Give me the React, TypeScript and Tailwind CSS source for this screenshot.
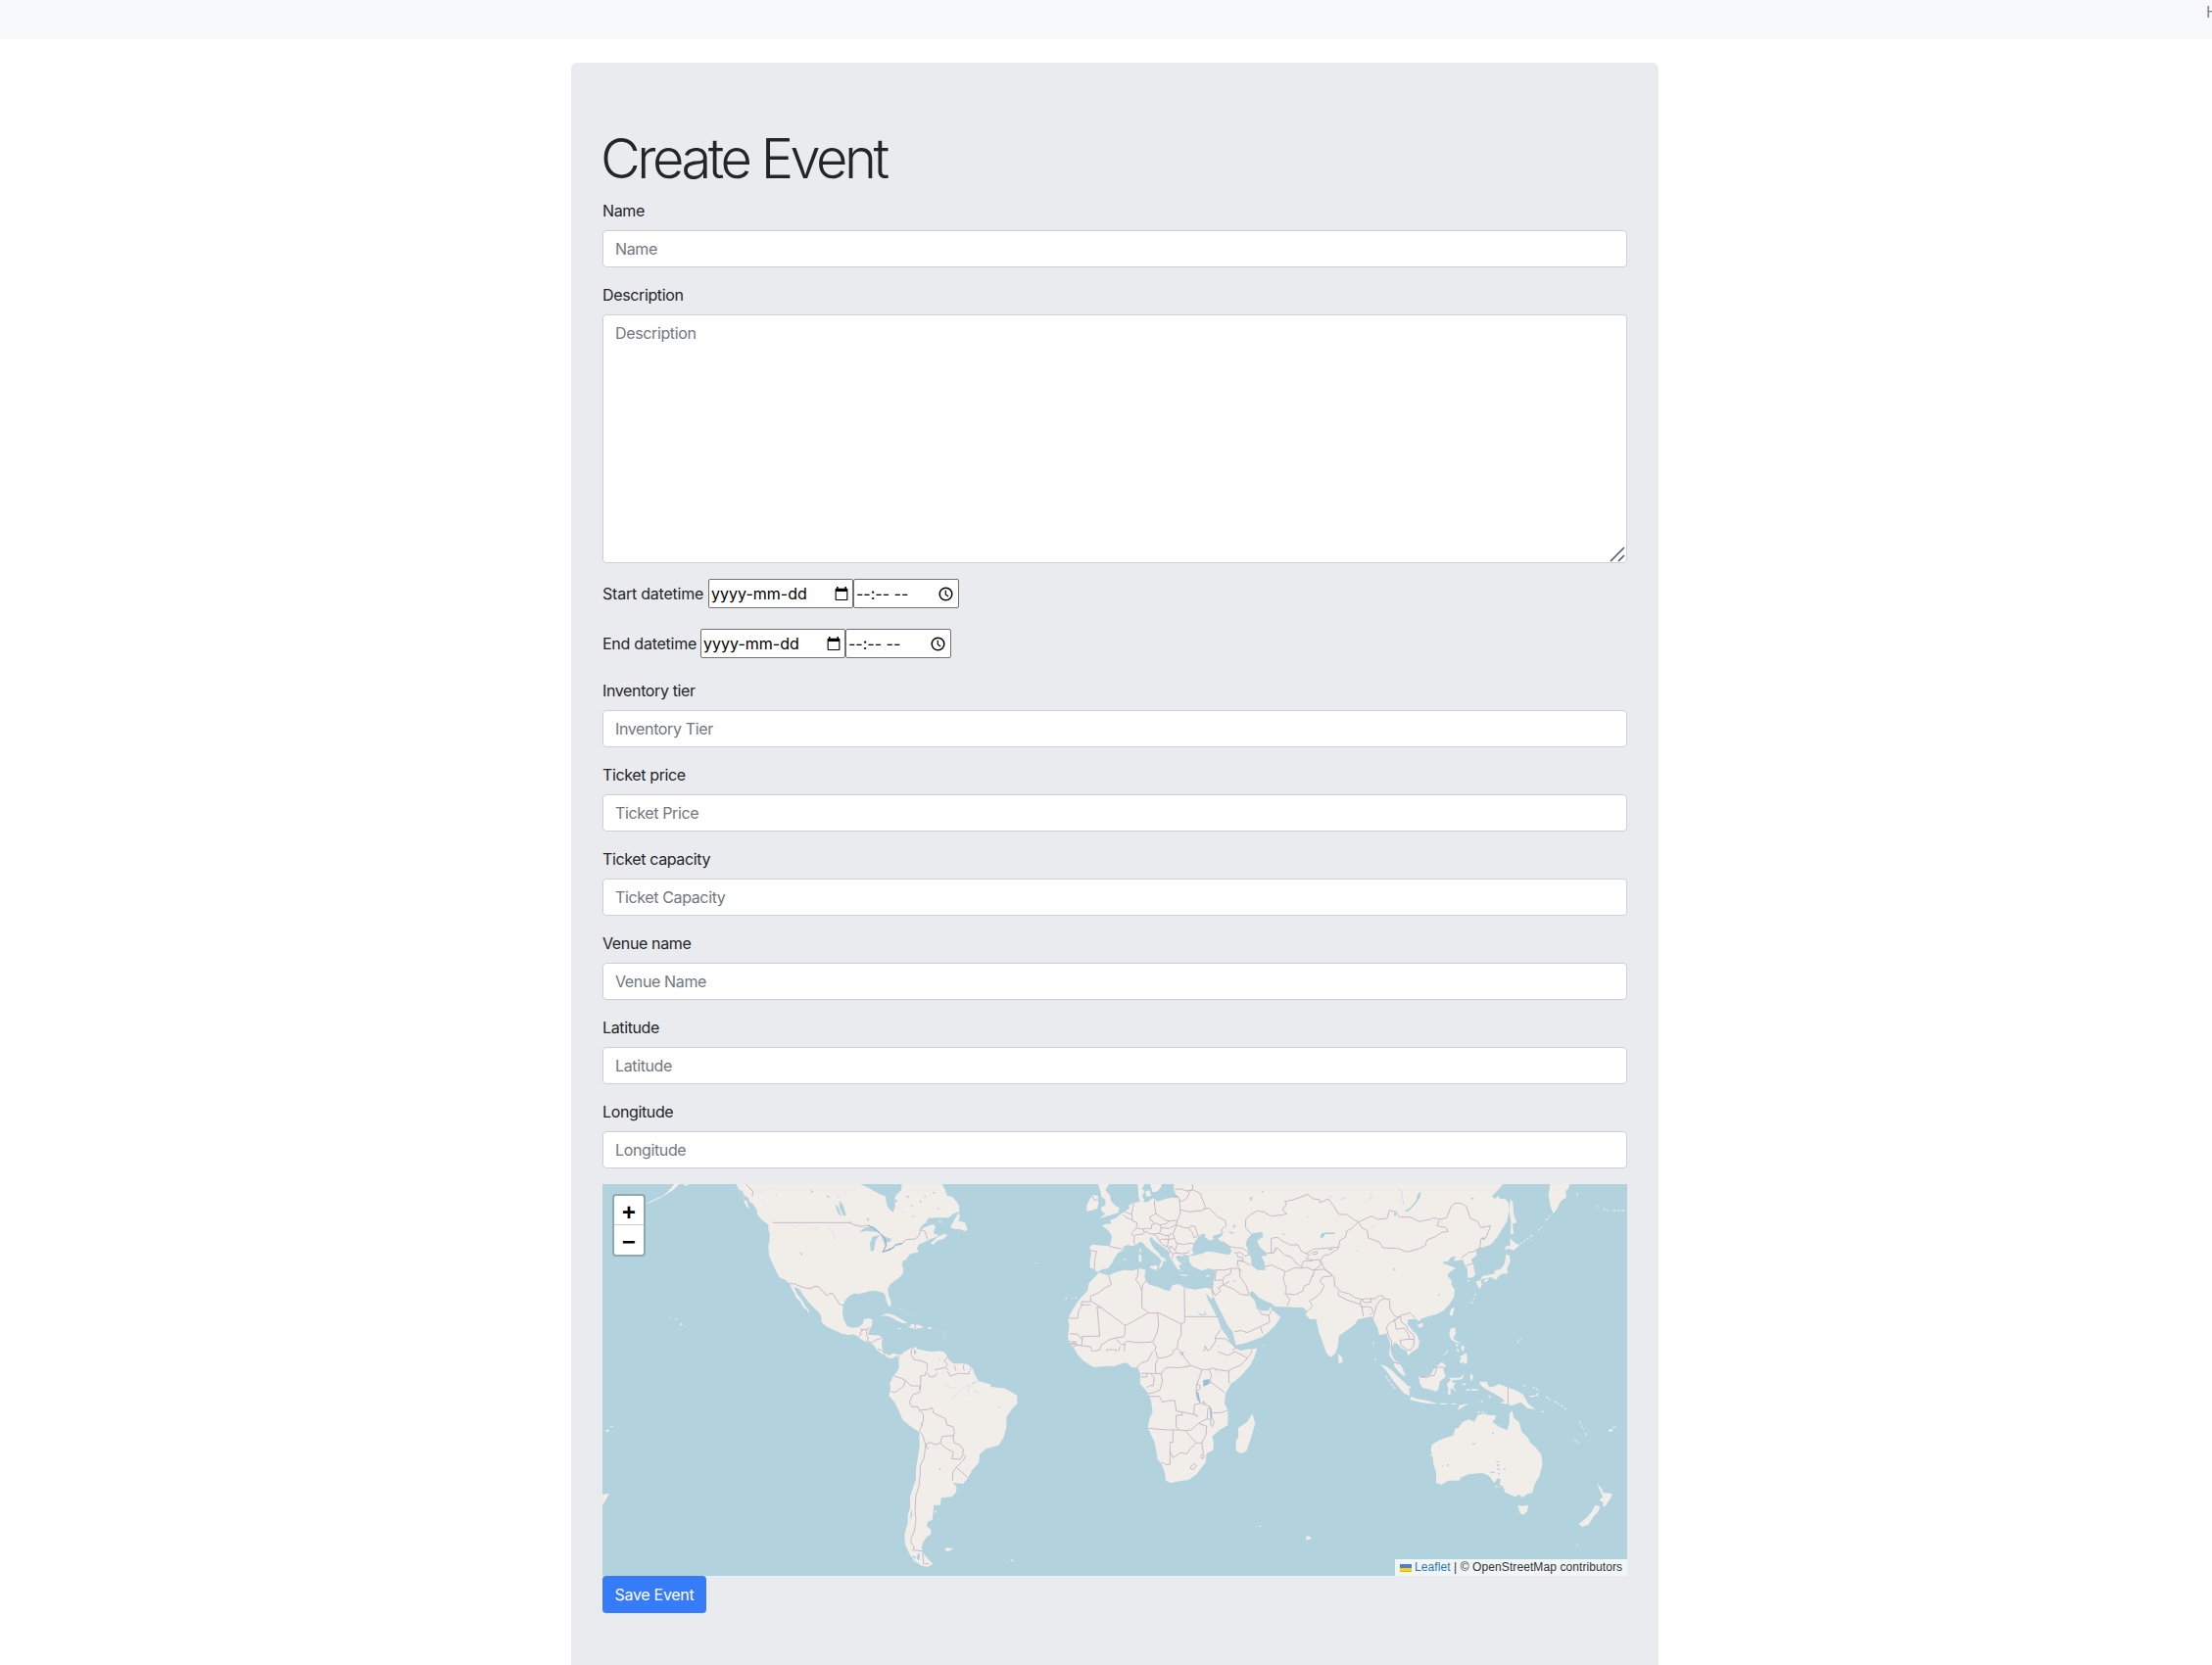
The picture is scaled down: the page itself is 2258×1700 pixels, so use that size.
import React from 'react';

function Field({ label, placeholder }: { label: string; placeholder: string }) {
  return (
    <div className="mb-4 flex flex-col">
      <label className="mb-2 h-6 self-start tracking-[-0.37px]">{label}</label>
      <input
        className="h-[38px] w-full rounded border border-[#cdd1d7] bg-white px-3 py-1.5 tracking-[-0.37px] placeholder:text-[#71777e] placeholder:opacity-100"
        placeholder={placeholder}
      />
    </div>
  );
}

function DateTime({ label, labelClass }: { label: string; labelClass: string }) {
  return (
    <div className="flex h-[30px] items-center">
      <span className={labelClass}>{label}</span>
      <div className="flex h-[30px] w-[148px] items-center justify-between rounded-[2px] border border-[#717171] bg-white pr-1 pl-[2px] text-black">
        <span className="tracking-[0.02px]">yyyy-mm-dd</span>
        <svg width="14" height="15" viewBox="0 0 14 15">
          <path d="M2.8 0v2M11.2 0v2" stroke="#000" strokeWidth="1.5" />
          <path d="M1.5 1.8h11a.9.9 0 0 1 .9.9v10.4a.9.9 0 0 1-.9.9h-11a.9.9 0 0 1-.9-.9V2.700a.9.9 0 0 1 .9-.9zM1.700 5v7.900h10.600V5z" fillRule="evenodd" />
        </svg>
      </div>
      <div className="flex h-[30px] w-[108px] items-center justify-between rounded-[2px] border border-[#717171] bg-white pr-[5px] pl-[2px] text-black">
        <span className="whitespace-pre">--:-- --</span>
        <svg width="15" height="15" viewBox="0 0 15 15" fill="none" stroke="#000">
          <circle cx="7.500" cy="7.500" r="6.300" strokeWidth="1.500" />
          <path d="M7.300 3.700v4.200l2.800 2" strokeWidth="1.200" />
        </svg>
      </div>
    </div>
  );
}

const border = { fill: 'none', stroke: '#c8b8c7', strokeWidth: 3, strokeLinejoin: 'round' as const };

function WorldMap() {
  return (
    <svg className="block" width="1046" height="400" viewBox="0 0 1046 400" fill="#f1eeea">
      <rect width="1046" height="400" fill="#b2d2dd" />

      {/* North and Central America */}
      <g transform="translate(-5 -9) scale(.33333)">
        <path d="M425 27L432 42 445 50 450 62 462 70 465 80 475 88 487 105 490 122 505 130 515 140 523 150 523 165 527 180 526 205 523 215 525 245 532 262 540 280 550 300 556 312 575 320 588 332 595 348 602 360 608 375 622 388 628 402 640 412 648 424 647 412 635 400 628 385 618 372 610 362 602 343 612 345 622 355 630 368 640 380 652 395 665 408 678 420 685 432 686 450 700 463 725 475 750 485 768 489 785 487 798 495 810 505 830 512 845 520 855 535 868 545 880 553 893 560 905 560 915 552 922 565 923 590 915 605 905 615 900 632H1168L1155 610 1150 595 1135 580 1120 577 1090 577 1075 565 1068 550 1060 540 1045 538 1025 541 1005 538 990 535 978 532 975 523 965 527 955 532 940 540 930 550 918 548 905 545 893 552 880 545 872 535 870 515 873 498 860 490 845 490 828 488 832 475 840 460 842 442 828 438 815 442 812 455 800 465 780 467 765 463 755 445 750 425 752 400 757 385 770 370 785 362 800 363 815 360 835 355 850 353 868 358 875 360 882 370 885 388 893 403 899 400 898 385 892 370 888 350 895 335 910 323 925 313 935 300 937 285 932 275 935 262 945 258 955 242 970 238 984 235 978 225 983 212 1000 205 1010 200 1020 195 1035 190 1045 182 1030 180 1030 168 1036 158 1028 150 1000 160 983 172 990 158 1005 145 1013 131 1040 130 1075 130 1090 118 1108 110 1107 92 1095 75 1085 65 1070 62 1065 45 1055 27H932L930 45 915 60 908 75 912 95 905 113 895 105 885 90 882 65 865 58 850 50 830 38 805 27Z" />
        <path d="M1020 208L1040 190 1060 180 1072 182 1060 195 1040 200 1028 212ZM1080 160L1090 140 1105 115 1110 125 1105 140 1125 145 1133 165 1125 172 1110 165 1095 165ZM1042 137L1062 146 1045 142ZM490 122L505 128 525 142 537 153 522 150 505 138ZM145 90L165 78 200 62 215 50 235 27H250L235 42 212 58 190 70 165 82ZM264 27H280L270 34ZM447 75L458 80 464 103 455 95ZM863 433L885 423 905 427 925 438 950 452 935 453 915 445 900 435 880 430ZM948 465L960 462 958 456 985 458 1000 466 975 470ZM917 467L932 469 922 472ZM1010 466H1023V470H1010ZM252 452L262 456 255 461ZM236 438L244 441 240 443ZM219 432L225 434 222 436ZM248 444L254 447Z" />
        <path d="M915 392L918 400M925 410L938 414M943 420L948 430M960 425L972 433M1045 473L1055 477 1061 490 1062 505M1068 538L1074 545M425 40L445 62 462 90M432 30L450 45" stroke="#d9e3e2" strokeWidth="3" strokeDasharray="4 5" fill="none" />
        <path d="M740 78L752 92 762 125 752 122 742 102ZM727 88L736 96 748 128 735 115ZM800 175L820 160 845 156 865 175 850 173 825 170ZM837 234L834 210 842 188 865 184 852 198 846 230ZM865 180L885 190 900 195 895 205 885 205 882 220 872 195ZM873 235L895 222 914 220 890 232ZM908 216L935 208 930 214ZM825 128L833 134 828 142ZM770 140L778 145 774 149ZM618 235L628 240 625 246ZM655 42L662 55 654 52ZM700 60L712 67 704 70ZM970 531L977 540 973 550 969 545ZM960 125L975 130 968 124ZM1025 50L1034 52 1030 58ZM987 75L993 82 986 85ZM905 85L920 80 912 72ZM945 60L955 66 949 70ZM1000 60L1006 64 1002 68ZM1040 98L1048 103 1041 105ZM960 90L968 94 962 96ZM735 63L742 66 736 68ZM1045 560L1049 562 1047 568Z" fill="#b2d2dd" />
        <path d="M490 50L505 55M500 75L512 90M520 36L530 45M548 55L550 68M600 160L615 156M665 162L680 158M705 160L725 178 725 200M930 108L945 115" fill="none" stroke="#dde5e5" strokeWidth="3" />
        <g {...border}>
          <path d="M454 27L468 42 476 50 474 64M536 145H772L785 152 810 157 828 153 845 162 865 178 880 192 884 215 873 235 900 226 912 213 933 208 945 197 972 195 983 187 990 167 1003 172 1010 195M586 332L602 332 615 338 640 346 658 346 662 340 675 341 690 355 698 366 706 367 710 362 720 362 730 378 742 396 754 398M797 497L808 486 803 482 812 476 805 472H828L832 466M824 472V492L830 497 825 506 840 514 850 505 872 498M858 532L868 536 878 543 878 553M920 550L924 563M973 455V468M975 523L962 532 960 550 970 565 990 568 1008 575 1010 600 1018 618 1032 615 1040 605 1033 595 1062 590 1072 580 1062 568 1070 558M1066 588L1077 600 1082 615 1095 612 1105 606 1097 598 1093 582M1105 606L1120 608 1128 605 1120 592 1122 580M1128 605L1138 608 1142 592M908 615L930 622 945 630M988 630L990 615 1008 612" />
          <path d="M828 153L845 162 865 178 880 192 884 215 873 235 900 226 912 213 933 208" stroke="#9badcb" />
        </g>
      </g>

      {/* Europe, Middle East and northern Africa */}
      <g transform="translate(385 -9) scale(.33333)">
        <path d="M595 27V44L600 58 610 70 590 68 570 72 545 80 530 70 515 82 500 82 505 75 498 65 505 48 497 42 505 27H484L486 45 486 62 492 80 470 85 455 93 460 100 445 110 430 120 420 130 400 138 403 148 385 150 374 154 385 162 395 170 405 185 402 205 398 217 375 215 345 212 337 220 342 240 338 260 338 285 350 286 360 296 375 288 392 285 405 270 412 255 422 240 440 228 440 218 455 213 465 217 480 212 492 203 500 207 510 220 520 228 535 240 548 250 557 262 548 284 552 286 560 275 562 262 572 265 568 255 555 248 548 238 535 225 525 210 520 195 528 188 532 197 545 208 560 218 570 225 580 235 582 250 590 262 598 275 608 290 615 288 610 275 620 272 608 262 600 250 612 245 620 250 625 243 640 246 655 240 650 228 658 205 670 188 680 180 692 180 690 190 705 200 718 195 712 187 725 182 735 180 748 172 742 185 728 195 745 205 765 218 772 232 765 243 740 240 715 235 695 233 680 240 660 245 640 248 642 265 652 280 665 285 680 292 700 285 722 290 720 310 715 330 710 347 690 345 660 350 630 345 610 333 590 337 582 355 565 350 545 342 520 335 510 325 505 310 508 290 490 285 470 292 440 290 415 298 395 307 380 303 365 298 355 310 335 330 330 355 310 375 298 390 280 420 270 440 275 460 270 495 275 515 290 530 300 550 320 565 335 580 350 587 380 582 410 585 440 575 460 573 470 585 490 588 497 605 495 632H780L800 610 825 585 840 560 850 530 825 532 800 537 785 530 770 515 755 490 740 470 730 440 715 410 700 383 692 360 710 380 716 370 725 392 745 430 757 455 775 480 780 500 785 520 810 515 840 505 865 495 885 480 905 460 922 435 905 420 893 412 893 398 885 415 865 415 855 408 848 400 840 380 828 370 828 357 838 356 855 375 875 385 895 393 903 402 935 403 970 405 990 405 1005 418 998 425 1010 440 1030 440 1035 460 1040 485 1052 505V27Z" />
        <path d="M363 27H397L385 45 400 62 402 78 415 92 428 100 424 115 400 122 368 131 385 118 372 108 373 97 385 92 385 75 372 65 370 48ZM328 110L328 92 335 78 345 60 362 62 364 85 360 102 345 107ZM522 27L530 52 542 50 555 38 558 27ZM507 50L520 45 525 62 512 66ZM487 242L495 243 496 263 488 266ZM491 222L495 226 493 238 490 235ZM520 279L545 275 542 291 525 284ZM614 303L638 306 635 309 615 307ZM690 309L706 304 700 311ZM440 258L450 254 446 260ZM422 265L427 266 424 268ZM637 272L640 276ZM170 268H178V270H170ZM193 277L200 278ZM260 377L268 373 266 380ZM280 378L285 372 282 380ZM291 375L299 372 296 378ZM266 330L271 331ZM198 480L203 478M218 487L222 494M206 495L212 497M868 518L878 519 870 521ZM612 290L625 296 620 292Z" />
        <path d="M820 195L835 178 865 173 868 188 850 200 858 220 875 235 880 245 862 248 872 265 875 290 850 290 832 275 832 255 822 230 815 210ZM826 70L836 65 832 80ZM775 155L785 150 778 165ZM780 175L760 172 772 180ZM690 138L700 143ZM674 122L682 127ZM862 50L872 47 865 55ZM925 178L938 180 930 183ZM1000 125L1006 127 1002 131ZM787 267L790 274 786 271ZM888 304L897 306ZM846 397L854 400 854 412 848 409ZM729 521L734 522 732 527ZM1042 180L1050 176V190Z" fill="#b2d2dd" />
        <path d="M670 422L680 428 692 426 690 418M403 548L410 560 415 570M778 323L785 325M900 235L905 228 906 220" fill="none" stroke="#a9ccda" strokeWidth="3" />
        <path d="M616 262L630 265M625 250L635 262M622 278L632 288M642 290L650 294" stroke="#d9e3e2" strokeWidth="3" strokeDasharray="4 3" fill="none" />
        <g {...border}>
          {/* western and central Europe */}
          <path d="M345 62L350 75 362 76M398 217L415 222 438 226M337 230L358 233 352 262 352 286M438 120L450 130 468 137M445 112L465 120 470 95 473 85M466 118L468 140 482 145 480 162 468 175 466 182 474 190 472 205 478 212M482 162L500 165 515 162 525 165 527 152 538 147 525 138 520 128 540 118 536 95 535 78M540 118L555 128 570 138 580 140 605 138 615 115 612 75M474 184L485 182 500 180 508 172 520 178 530 180 550 178 556 165 553 152 540 147M500 165L505 175M553 152L572 148 580 140M556 160L580 163 603 150 605 138M550 178L570 185 580 183 595 175 603 152 625 160 640 162 648 155 660 157 665 175 670 185 655 192M530 180L545 190 550 200 560 195 580 197 578 183M550 200L560 212 575 220 578 197M578 197L597 193 592 180M578 220L588 218 598 230 605 212 597 193M605 208L625 212 642 208 658 210M598 230L606 238 620 240 638 238 642 230M575 220L584 232 580 240M588 218L580 228 592 240 590 255M592 240L606 238" />
          {/* eastern Europe */}
          <path d="M598 43L618 42 635 48 642 55 635 70 620 80 612 75 608 65 595 64M635 48L652 44 652 27M642 50L652 44 675 55 685 80 692 98 682 108 660 110 640 112 615 105M685 104L703 100 712 110 730 128 752 138 755 155 742 165 740 175M640 162L652 175 655 190" />
          {/* Caucasus and central Asia */}
          <path d="M745 203L765 218 785 222 805 223 822 235 826 245M780 238L800 236 812 248 825 243M788 240L790 250 805 252 808 265 790 260 792 280M805 262L818 270 830 275M722 290L750 290 775 285 795 285 802 295M795 262L805 262M832 180L814 160 815 135 830 120 850 109 870 112 892 125 925 122 940 118 927 105 940 90 935 80 960 75 980 68 1005 58 1020 72 1042 74M873 280L895 275 915 285 940 295 965 283 985 285M893 238V193L912 190 925 200 950 213 975 213 985 232 1000 240 1020 228 1050 218M878 238H900L912 222 935 245 955 250 970 270 985 280M1000 240L1010 245 1000 255 1018 260 1035 250 1028 235 1015 240M935 295L930 320 940 345 935 362 950 380 942 400M985 285L1000 282 1020 290 1040 288M937 362L965 366 990 355 993 340 1010 332 1018 308 1030 292M985 283L992 262 1020 262M1050 310L1048 350 1035 370 1010 385 1020 400 1005 415" />
          {/* Levant and Arabia */}
          <path d="M725 290L720 322 745 320 752 308 768 302 770 288M715 330L712 350 722 368 738 355 730 345 748 335 765 325M710 348L715 368M745 322L745 335 780 350 800 365 825 367 822 355 815 335 798 312 795 285M855 408L862 425 885 430 893 415M886 430L888 450 860 463 866 485M780 480L800 475 820 482 860 463" />
          {/* northern Africa */}
          <path d="M395 307L403 335 385 345 360 362 340 370V387L312 387V400L303 415 300 438H270M340 397H312M340 385L372 405 445 460 452 458 515 422 515 420 497 405V355L490 335 478 320 485 305V287M512 320L500 335 497 355M358 405H372M360 405L368 493H315L310 500 300 487 278 485M627 345L628 433H730M628 433V450L617 455 550 422 515 422M545 422L548 460 542 485 530 510 505 512 480 512 450 508 445 515 442 545 438 573M617 455L617 490 608 505 605 530 585 542 545 563 535 545 540 525 530 512M445 460V485L440 495 415 498 395 505 372 520 368 535 345 540 340 525 312 522 315 495M415 498L435 520 445 515M430 525L425 540 430 573M389 534H418L420 572M389 534V582M345 540L348 562 345 578M305 552L318 540 330 560 345 578M272 510H297M272 517H300M285 525L300 520 312 522M275 518L295 512M540 560L545 595 498 607M565 630L568 595 582 585 600 582 645 580M545 563L550 580 570 590M605 530L625 548 640 542 655 548 680 540 690 535 690 522 700 540 705 545 698 562 712 578 730 588M620 545L645 580 675 590 690 595 712 592M700 540L722 510 722 495 738 472M722 500L750 500 770 512 785 530 775 535 790 552 820 560 835 530M820 560L798 583 780 590 765 600V630M712 592L710 610 705 630M680 598L675 615 670 630M730 588L755 592 770 600M498 605V618H510" />
        </g>
      </g>

      {/* Eastern Asia */}
      <g transform="translate(725 -9) scale(.33333)">
        <path d="M0 27H583L567 45 548 65 560 72 565 62 575 73 590 72 600 85 602 105 595 140 580 165 565 190 545 212 525 220 508 222 500 235 502 245 485 258 492 275 498 305 490 313 475 314 473 285 465 273 460 258 440 262 432 262 438 248 425 250 412 265 400 263 400 270 415 275 438 285 418 298 412 308 425 322 425 335 435 350 432 375 418 395 400 415 380 425 355 432 335 438 325 448 318 440 305 440 292 442 290 455 305 475 320 490 327 510 322 530 305 540 292 552 288 538 272 530 262 518 250 512 243 525 240 545 250 565 265 575 275 590 284 615 275 612 262 600 250 585 248 570 235 552 235 540 238 520 232 500 225 483 215 488 203 488 200 470 190 450 180 433 155 437 138 442 130 455 105 475 80 492 78 520 70 545 55 557 42 545 30 510 18 475 12 435 0 442Z" />
        <path d="M605 73L613 82 616 120 625 145 612 148 615 180 606 180 607 140 602 110ZM605 205L605 193 620 208 635 213 615 230 600 224 590 230 590 218 605 215ZM592 242L603 245 605 265 595 285 597 300 575 304 560 320 545 312 520 318 512 322 520 308 555 302 558 292 575 288 588 270 590 255ZM525 320L540 316 535 324 526 328ZM500 325L515 322 518 335 512 348 505 338ZM727 27H787L782 42 775 48 777 68 760 78 750 100 737 118 728 95 722 60ZM419 427L423 410 433 404 433 412 427 432ZM320 458L338 452 338 462 328 468ZM422 470L435 465 438 485 430 500 440 508 455 515 440 512 425 505 418 490ZM437 515L448 520 440 525ZM455 520L465 525 462 540 455 535ZM440 530L448 533 445 545ZM450 565L460 560 465 543 472 560 470 578 460 572 452 577ZM77 545L90 558 92 572 80 577ZM394 555L405 545 418 530 410 545ZM473 321H481V325H473Z" />
        <path d="M635 211L650 200 675 183M690 170L703 158M715 138L728 122M500 363L485 395M808 55L815 66M868 92L875 100M890 103L905 108M920 108H960M187 510L184 525M190 560L194 568M627 512L638 498" fill="none" stroke="#dfe7e5" strokeWidth="4" strokeDasharray="8 5" />
        <path d="M331 50L328 68 310 92 292 110 280 111 300 98 318 75 322 58ZM22 190L28 178 45 175 70 176 65 180 38 180 30 192ZM45 224L65 225 55 230ZM245 285L255 288 248 291ZM485 70L495 68 488 76ZM180 125L190 128ZM248 115L256 117 252 128ZM518 190L530 192 522 200ZM385 362L390 367 385 371ZM418 345L425 349ZM152 340L156 342ZM165 349L170 352ZM105 140L115 145ZM100 155L115 160ZM90 178L95 185ZM404 322L407 325Z" fill="#a3cfdf" />
        <path d="M262 42L272 50 275 65 278 90M175 55L182 65 170 75M85 75L102 68M52 66L60 64M178 160L190 155M132 230L142 234M390 148L398 140" fill="none" stroke="#cadfe3" strokeWidth="3" />
        <g {...border}>
          <path d="M0 72L20 74 22 84 48 72 65 95 80 120 105 120 125 135 140 143 120 162 105 170 100 190 83 200 78 225 50 243 35 245 25 260 35 285 65 310 68 340 90 358 110 362 130 375 148 380 165 378 190 378 205 368 215 370 218 378 235 380 237 410 250 430 262 435 272 428 290 425 292 420 302 425 314 438M140 143L180 125 200 135 228 132 235 107 255 112 265 128 300 128 325 142 360 135 370 130 390 135 410 130 424 95 435 85 455 86 470 95 483 132 505 142 515 160 545 155 530 192 515 195 512 222 490 235 480 235 455 253M140 143L150 160 168 170 170 192 205 205 215 222 260 224 290 235 325 225 345 215 350 198 375 188 395 175 415 172 408 160 380 155 388 138M470 277L490 270M0 225H22L50 222 78 220M0 242H12L15 235 2 235M0 260L20 258 25 275 5 290 0 312M0 290L35 288 60 305M60 308L30 312 22 325 35 338 25 360 0 380M80 355L78 368 105 382 145 395 150 380M150 380L158 390 180 388 178 376M145 392L150 405 165 402 180 405 185 418 175 428M150 398L155 432M205 385L195 400 190 420 182 445M205 385L218 378M262 435L255 442 235 452 226 468 232 490 242 510 240 540M255 442L268 432 272 450 288 462 292 475 310 490 310 520 300 535 290 535 270 520 268 505 295 502 310 503M250 440L256 472 280 468 292 485 297 502M248 572L265 577M327 617L350 618 362 612 372 614 380 592 370 588H400" />
        </g>
      </g>

      {/* South America */}
      <g transform="translate(-5 191) scale(.33333)">
        <path d="M920-2L908 15 895 35 897 55 892 75 910 95 922 120 935 150 960 170 985 187 986 230 980 270 975 300 975 330 965 360 957 385 957 420 950 440 950 465 940 500 942 530 955 560 970 580 990 595 1010 600 1027 590 1012 576 1000 560 992 540 996 525 1008 508 1020 500 1022 487 1008 475 1010 462 1025 455 1028 430 1030 410 1050 410 1052 388 1085 385 1097 372 1100 355 1088 342 1120 345 1133 328 1150 300 1168 280 1170 255 1190 238 1228 227 1245 200 1252 170 1252 140 1270 115 1285 100 1285 75 1270 65 1245 52 1205 48 1203 40 1165 30 1145 42 1157 20 1148-2Z" />
        <path d="M15 378L35 374 28 390 15 410ZM24 182L34 178 36 183 28 187ZM36 170L48 167 44 172ZM1062 548L1068 541 1090 543 1080 550 1070 552ZM1262 577L1276 586 1272 578ZM1035 587L1040 589M1030 430L1040 428 1035 435ZM240 10L243 12" />
        <path d="M1045 297L1053 299 1048 304ZM988 160L996 162 993 168ZM1222 112L1236 107 1230 112ZM1157 60L1163 64 1160 67ZM1131 224L1141 214ZM1070 40L1077 42ZM1150 302L1143 310 1148 300ZM1010 188L1014 191ZM980 560L987 558 985 580 978 575ZM962 563L976 570 972 575ZM945 505L952 520ZM955 480L964 490ZM960 420L964 440 958 455Z" fill="#a9d0dd" />
        <path d="M1165 30L1143 42 1130 45 1115 55 1100 70 1088 85M1135 45L1138 75M1060 38L1080 50 1100 52M960 495L968 500M958 548L970 552M965 580L985 590" fill="none" stroke="#dae4e3" strokeWidth="3" />
        <path {...border} d="M908 15L930 22 942 28 960 45H985L988 58M942 30L938 45 912 65 898 62M988 58L990 30 988 15 1005 12V0M1010 5L1018 18 1035 15 1040 5M1072 0L1080 15 1095 10 1105 6 1120 8 1138 8V0M985 65L965 72 955 95 962 110 980 108 985 120 1008 118 1025 112 1028 128 1065 145 1070 165 1088 170 1093 185 1090 200M985 58L988 65M985 120L997 130 998 150 992 170 985 185 995 195 1005 225 1012 240M1005 225L1018 218 1035 225 1050 220 1055 200 1088 197 1092 220 1108 225 1120 240 1118 255M1050 220L1065 235 1090 248 1085 268 1110 270 1120 255 1127 262 1118 275 1098 295 1088 310 1087 335M1098 295L1115 308 1132 325M1005 225L1003 238 1000 265 988 290 988 320 985 335 985 350 975 380 972 430 975 455 970 490 960 512 960 528 968 535 968 548 996 551 998 590H1015" />
      </g>

      {/* Central and southern Africa */}
      <g transform="translate(445 171) scale(.33333)">
        <path d="M118 0L125 15 140 30 170 47 210 45 245 35 270 33 285 48 305 50 313 70 311 98 335 125 345 150 350 185 340 205 335 235 355 275 360 300 365 330 378 345 388 375 390 395 405 403 430 397 460 393 485 375 500 355 512 340 515 312 535 302 537 280 532 260 555 240 580 225 580 180 570 160 573 128 590 98 620 75 650 40 668-2ZM655 190L664 220 652 260 637 305 620 313 605 303 605 275 613 260 611 235 640 215ZM705 270L711 272M723 263L729 263M820 566L828 565 837 573 820 578ZM859 622L864 625ZM604 186L606 188ZM617 195L621 197ZM675 534H682V537H675ZM885 0H900V15L890 12Z" />
        <path d="M505 87L523 85 524 98 505 107ZM482 120L490 125 497 158 487 148ZM524 170L530 175 533 210 527 205ZM540 48L547 65 542 58ZM502 150L514 158 506 158ZM388 100L393 106Z" fill="#8fbed8" />
        <path {...border} d="M315 67H375M315 78H332V67M332 110L345 103 352 105 355 80 345 70M375 67L380 90 372 118 345 128 338 128M338 137L370 137 380 155 400 150 418 150 422 182 440 185 440 195H422V230L430 240 395 240 335 235M375 70L390 50 410 48 430 50 470 43 500 55 520 55 535 50 548 55 580 60 598 50M360 70L358 40 365 25M500 55L495 75 485 100 483 125 487 145 497 158 478 162 476 190 488 200 485 195 440 185M526 92L570 125M583 98V55M505 95H526L530 70 522 55M483 98L495 103 495 115 483 120M497 158L525 168 528 188 560 187 580 180M525 168L518 178 517 205 490 220 467 240 450 242 430 240M517 205L528 210 527 225 533 230 538 215 530 205M490 220L515 228 513 255 500 280 485 280 467 262 450 242M412 243V278H403V345L392 347 378 338M403 305L412 325 435 310 455 313 467 295 485 280M500 280L506 315M500 315L508 320 505 328 497 325ZM467 352L478 343 484 350 475 362 466 358ZM360 0L365 20 390 18 410 8 415 0M438 0L445 15 465 42M300 50L315 35 335 28 350 0M550 0L580 12 602 0M602 0L640 20 655 0M640 20L618 43 598 50M433 0L440 12 445 0" />
      </g>

      {/* South-east Asia and Oceania */}
      <g transform="translate(745 171) scale(.33333)">
        <path d="M305 285L330 270 370 257 377 235 385 235 400 215 418 208 435 215 445 195 465 190 480 195 500 195 500 205 490 215 510 230 535 240 542 220 543 190 550 180 557 205 572 215 580 245 600 265 605 278 620 290 640 315 643 345 635 380 620 405 613 432 595 437 583 447 572 438 560 445 530 432 522 412 512 408 515 390 507 388 495 403 480 380 460 372 420 375 395 385 388 395 355 395 335 407 318 402 318 370 310 345 308 325 302 300ZM568 470L582 473 600 470 597 490 585 500 575 495ZM562 457L564 461M598 458L600 463M810 403L825 420 830 433 857 435 853 448 835 475 828 473 830 462 818 455 828 445 820 425ZM805 470L820 475 815 490 800 505 785 530 765 537 755 528 780 508 795 490ZM764 540L768 544 764 543Z" />
        <path d="M147 40L165 45 185 60 205 80 225 98 235 110 237 135 220 128 200 105 180 80 165 58ZM240 138L260 145 290 150 325 160 300 160 270 155 238 148ZM265 75L275 80 300 72 312 52 335 32 348 42 340 55 347 78 330 90 325 115 318 122 295 115 278 112 268 98ZM350 100L362 88 358 80 390 80 403 70 398 85 368 88 368 95 378 95 370 108 383 130 370 115 362 112 362 133 353 130 356 112ZM450 92L473 92 480 108 492 108 510 100 540 110 565 120 585 132 600 160 622 178 597 173 578 155 550 165 520 158 510 158 528 152 520 143 495 128 470 115 455 104ZM330 158L350 158 350 162 330 162ZM358 160L380 158 376 163ZM388 165L418 158 408 165 385 179ZM600 135L620 135 636 122 628 135 612 140ZM390 15L412 5 413 35 403 38 400 25ZM733 262L760 283 748 277ZM845 240L857 237 857 245 848 245ZM858 232L870 228 864 235ZM425 65L432 78 425 92 422 78ZM410 115H420V119H410ZM425 114L448 115 446 119H425ZM393 100L410 97 408 103ZM232 105L243 108 238 113ZM230 0H245L232 12Z" />
        <path d="M165 75L175 92M180 98L195 115M613 108L632 118M655 137L668 148M680 152L695 162M700 165L718 178M757 215L770 240M775 250L780 258M750 590V594M445 185L468 186M455 155L465 150M640 184H650M480 135L485 145M300 315L306 320M585 105H590M498 413L515 415" fill="none" stroke="#e5eae6" strokeWidth="4" strokeDasharray="8 4" />
        <path d="M429 283H437M489 249L494 250M502 337H510M504 348H512M505 360H512M484 370H497M507 373H513M525 360L530 361M350 348H357M337 351L340 352" stroke="#b0d1dd" strokeWidth="4" />
        <path {...border} d="M538 110V165M188 32L203 37M272 78L290 79 305 73 312 74 320 52 310 48H342" />
      </g>
    </svg>
  );
}

export default function App() {
  return (
    <div className={'h-[1700px] w-[2258px] overflow-hidden bg-white text-[#222629] font-["Inter",sans-serif] text-base leading-6'}>
      <nav className="flex h-10 w-full justify-end overflow-hidden bg-[#f8f9fb]">
        <span className="w-[6px] whitespace-nowrap text-[#828384]">Home</span>
      </nav>
      <main className="mt-6 ml-[583px] h-[1647px] w-[1110px] rounded-md bg-[#eaebef] px-8 pt-16">
        <h1 className="mb-2 -ml-[2px] h-[67px] pt-px text-[56px] leading-[67px] font-[330] tracking-[-3.5px] whitespace-nowrap">Create Event</h1>
        <Field label="Name" placeholder="Name" />
        <div className="mb-4 flex flex-col">
          <label className="mb-2 h-6 self-start tracking-[-0.37px]">Description</label>
          <div className="relative h-[254px]">
            <textarea
              className="block h-[254px] w-full resize-none rounded border border-[#cdd1d7] bg-white px-3 py-1.5 tracking-[-0.37px] placeholder:text-[#71777e] placeholder:opacity-100"
              placeholder="Description"
            />
            <svg className="absolute right-[2px] bottom-[1px]" width="16" height="16" viewBox="0 0 16 16" stroke="#5c5c5c" strokeWidth="1.700">
              <path d="M1 15L15 1M9 15L15 9" />
            </svg>
          </div>
        </div>
        <DateTime label="Start datetime" labelClass="w-[108px] tracking-[-0.22px] whitespace-nowrap" />
        <div className="h-[21px]" />
        <DateTime label="End datetime" labelClass="w-[100px] tracking-[-0.25px] whitespace-nowrap" />
        <div className="h-[21px]" />
        <Field label="Inventory tier" placeholder="Inventory Tier" />
        <Field label="Ticket price" placeholder="Ticket Price" />
        <Field label="Ticket capacity" placeholder="Ticket Capacity" />
        <Field label="Venue name" placeholder="Venue Name" />
        <Field label="Latitude" placeholder="Latitude" />
        <Field label="Longitude" placeholder="Longitude" />
        <div className="relative h-[400px] w-[1046px] overflow-hidden">
          <WorldMap />
          <div className='absolute top-[10px] left-[10px] flex h-16 w-[34px] flex-col rounded border-2 border-[#8fa8b1] bg-white text-center font-["Liberation_Mono",monospace] text-[24px] leading-[37px] font-bold text-black'>
            <span className="h-[30px] border-b border-[#ccc]">+</span>
            <span className="h-[30px]">−</span>
          </div>
          <div className='absolute right-0 bottom-0 flex h-[17px] w-[237px] items-center bg-[#f0f5f8] pl-[5px] font-["Liberation_Sans",sans-serif] text-xs leading-[17px] tracking-[0.09px] whitespace-pre text-[#333]'>
            <svg className="mr-[3px]" width="12" height="8" viewBox="0 0 12 8">
              <path fill="#4c7be1" d="M0 0h12v4H0z" />
              <path fill="#ffd500" d="M0 4h12v3H0z" />
              <path fill="#e0bc00" d="M0 7h12v1H0z" />
            </svg>
            <span className="text-[#2878a8]">Leaflet</span>
            <span> | © OpenStreetMap contributors</span>
          </div>
        </div>
        <button className="block h-[38px] w-[106px] rounded bg-[#367bf7] text-center tracking-[-0.3px] whitespace-nowrap text-white">Save Event</button>
      </main>
    </div>
  );
}
